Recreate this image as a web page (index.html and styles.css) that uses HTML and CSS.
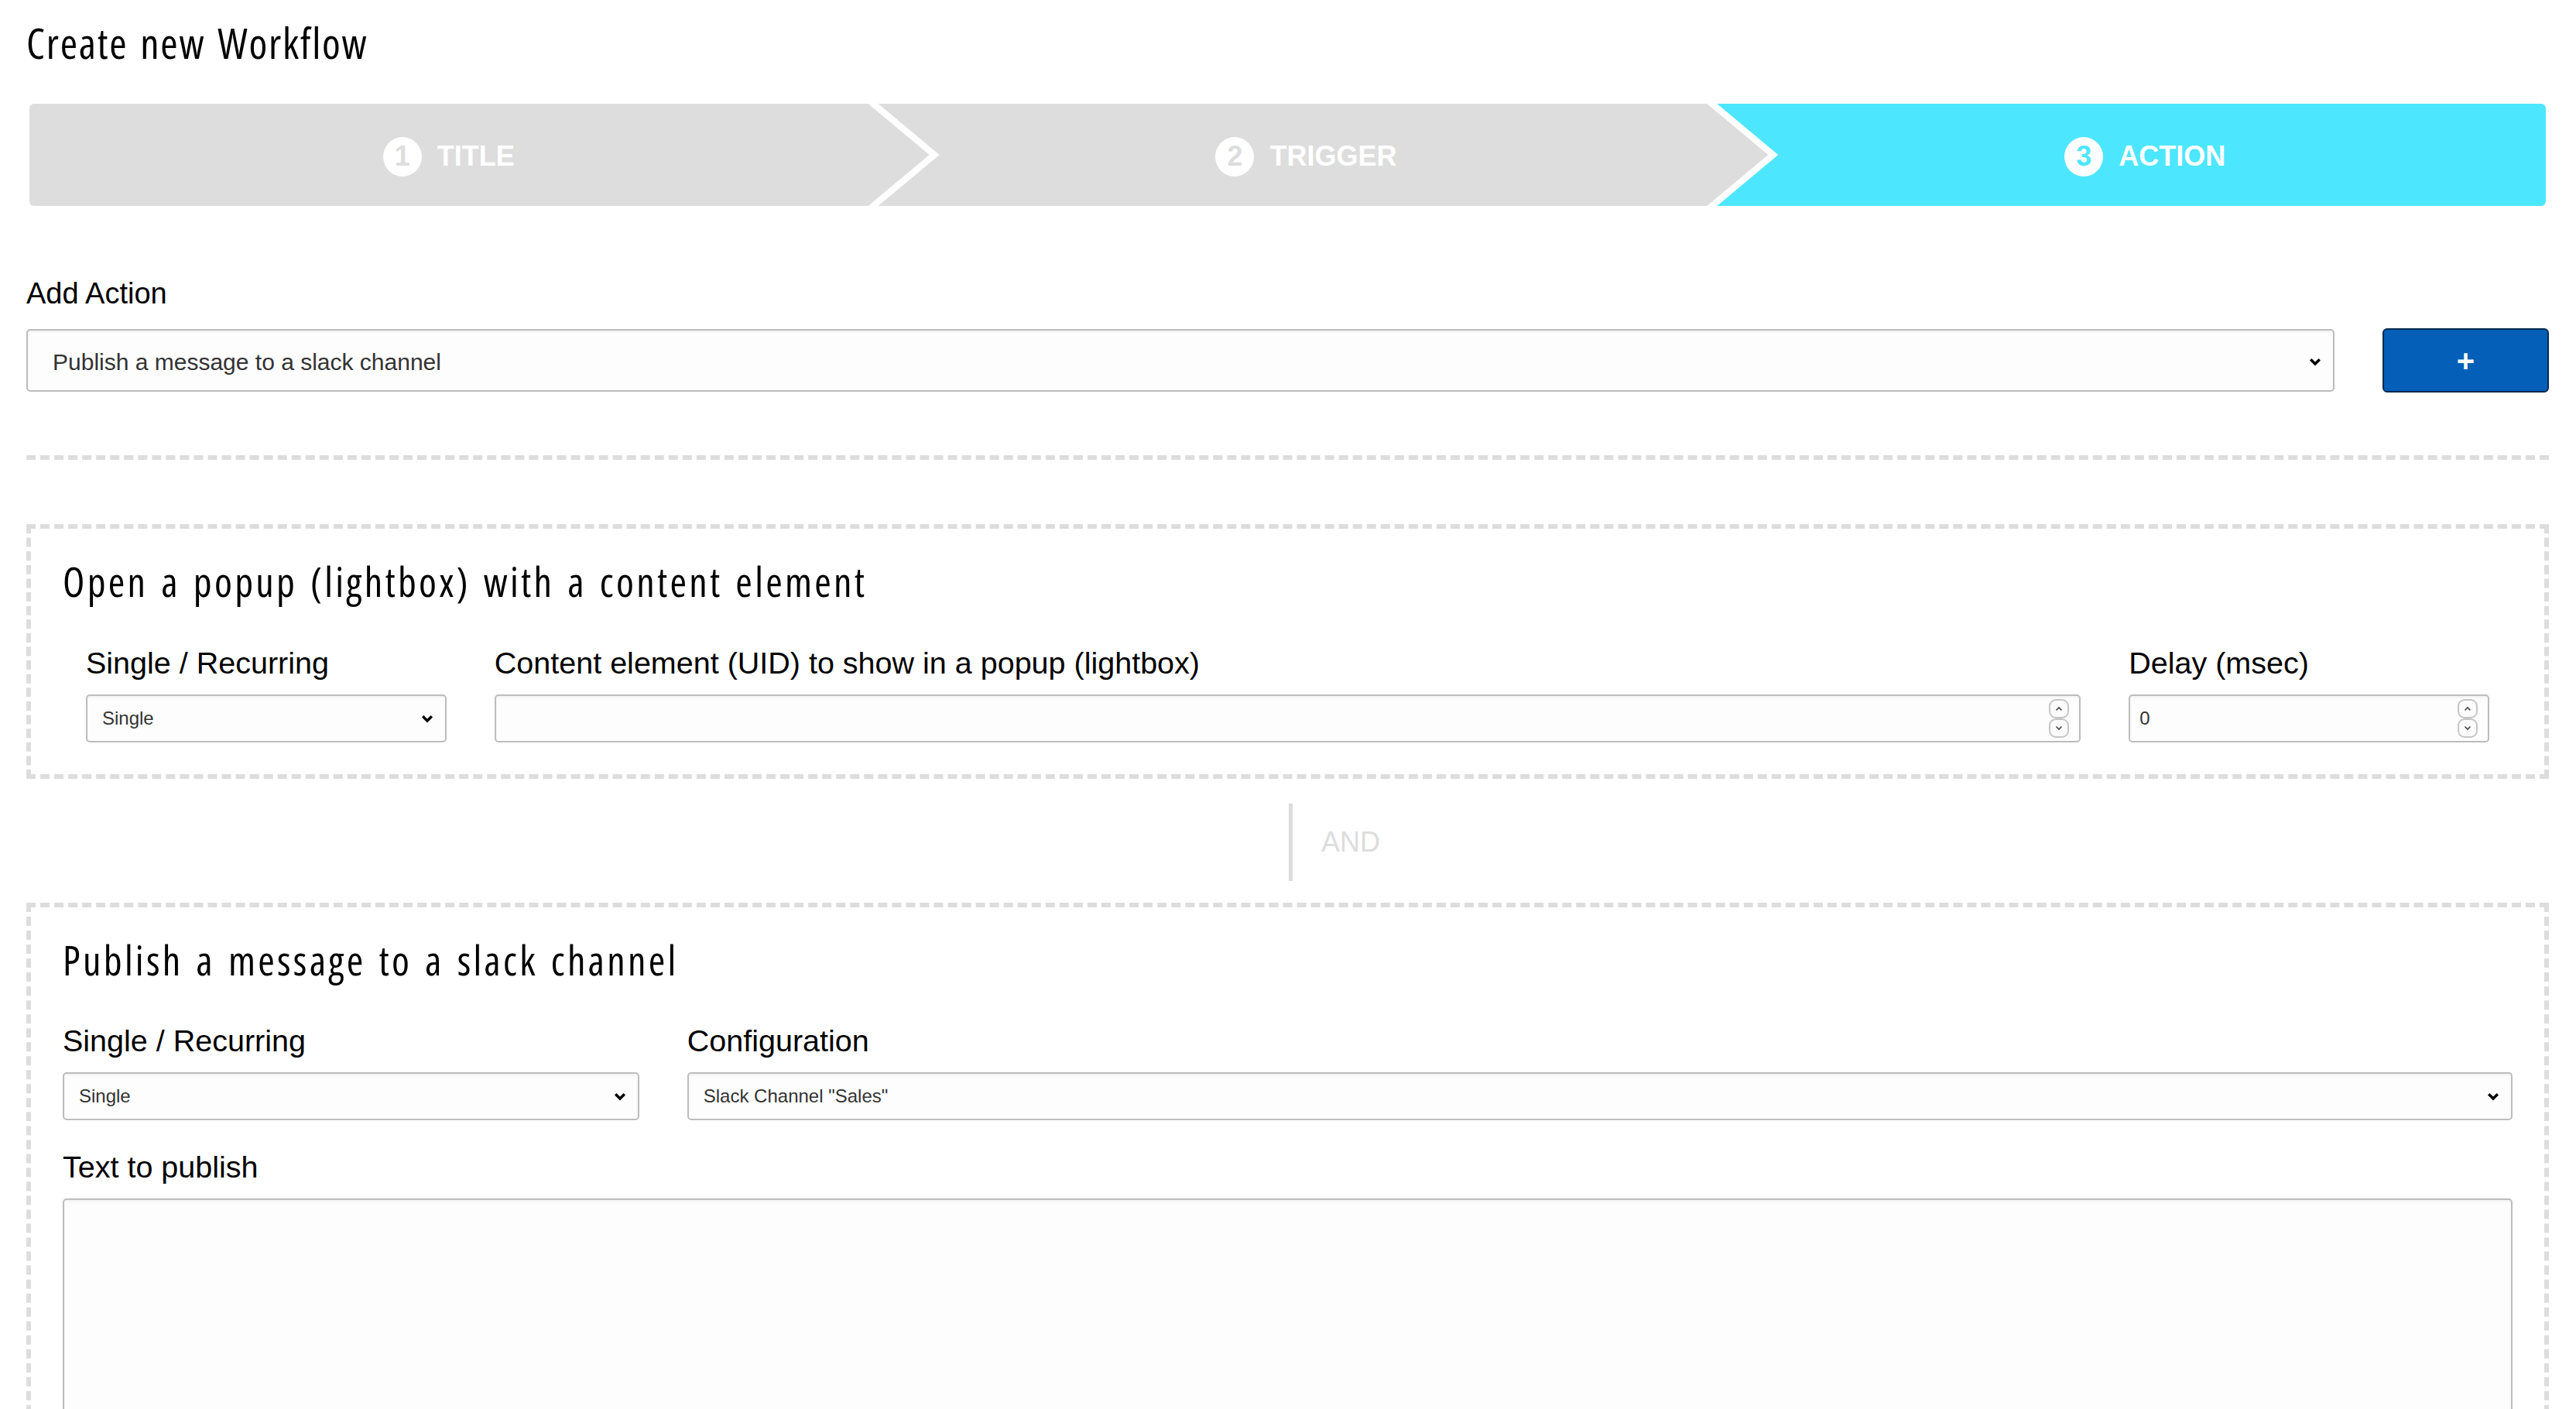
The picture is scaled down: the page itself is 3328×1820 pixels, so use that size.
FILE: index.html
```html
<!DOCTYPE html>
<html lang="en">
<head>
<meta charset="utf-8">
<title>Create new Workflow</title>
<link rel="stylesheet" href="styles.css">
</head>
<body>
<main class="page">
  <h1 class="page-title">Create new Workflow</h1>

  <ol class="steps">
    <li class="step step-first"><span class="step-num">1</span><span class="step-label">TITLE</span></li>
    <li class="step step-mid"><span class="step-num">2</span><span class="step-label">TRIGGER</span></li>
    <li class="step step-last step-active"><span class="step-num">3</span><span class="step-label">ACTION</span></li>
  </ol>

  <section class="add-action">
    <div class="add-label">Add Action</div>
    <div class="add-row">
      <div class="select select-lg">
        <span>Publish a message to a slack channel</span>
        <svg class="chev" width="16" height="11" viewBox="0 0 16 11"><polyline points="2.2,2.2 8,8 13.8,2.2" fill="none" stroke="#000" stroke-width="3.4"/></svg>
      </div>
      <button class="btn-add" type="button">+</button>
    </div>
  </section>

  <section class="action-box">
    <h2 class="box-title">Open a popup (lightbox) with a content element</h2>
    <div class="fields fields-popup">
      <div class="field">
        <div class="field-label">Single / Recurring</div>
        <div class="select">
          <span>Single</span>
          <svg class="chev" width="16" height="11" viewBox="0 0 16 11"><polyline points="2.2,2.2 8,8 13.8,2.2" fill="none" stroke="#000" stroke-width="3.4"/></svg>
        </div>
      </div>
      <div class="field">
        <div class="field-label">Content element (UID) to show in a popup (lightbox)</div>
        <div class="num">
          <input class="num-input" type="text" value="">
          <div class="spin">
            <span class="spin-btn"><svg width="10" height="7" viewBox="0 0 10 7"><polyline points="1.5,5.5 5,2 8.5,5.5" fill="none" stroke="#444" stroke-width="1.6"/></svg></span>
            <span class="spin-btn"><svg width="10" height="7" viewBox="0 0 10 7"><polyline points="1.5,1.5 5,5 8.5,1.5" fill="none" stroke="#444" stroke-width="1.6"/></svg></span>
          </div>
        </div>
      </div>
      <div class="field">
        <div class="field-label">Delay (msec)</div>
        <div class="num">
          <input class="num-input" type="text" value="0">
          <div class="spin">
            <span class="spin-btn"><svg width="10" height="7" viewBox="0 0 10 7"><polyline points="1.5,5.5 5,2 8.5,5.5" fill="none" stroke="#444" stroke-width="1.6"/></svg></span>
            <span class="spin-btn"><svg width="10" height="7" viewBox="0 0 10 7"><polyline points="1.5,1.5 5,5 8.5,1.5" fill="none" stroke="#444" stroke-width="1.6"/></svg></span>
          </div>
        </div>
      </div>
    </div>
  </section>

  <div class="and-sep">
    <span class="and-line"></span>
    <span class="and-text">AND</span>
  </div>

  <section class="action-box">
    <h2 class="box-title">Publish a message to a slack channel</h2>
    <div class="fields fields-slack">
      <div class="field">
        <div class="field-label">Single / Recurring</div>
        <div class="select">
          <span>Single</span>
          <svg class="chev" width="16" height="11" viewBox="0 0 16 11"><polyline points="2.2,2.2 8,8 13.8,2.2" fill="none" stroke="#000" stroke-width="3.4"/></svg>
        </div>
      </div>
      <div class="field">
        <div class="field-label">Configuration</div>
        <div class="select">
          <span>Slack Channel "Sales"</span>
          <svg class="chev" width="16" height="11" viewBox="0 0 16 11"><polyline points="2.2,2.2 8,8 13.8,2.2" fill="none" stroke="#000" stroke-width="3.4"/></svg>
        </div>
      </div>
    </div>
    <div class="field field-text">
      <div class="field-label">Text to publish</div>
      <textarea class="textarea"></textarea>
    </div>
  </section>
</main>
</body>
</html>
```

FILE: styles.css
```css
html, body {
  margin: 0;
  padding: 0;
  background: #ffffff;
}

body {
  font-family: "Liberation Sans", Arial, sans-serif;
  color: #000;
}

.page {
  padding: 24px 35px 0 34px;
}

.page-title {
  margin: 0;
  font-family: "Open Sans", "Noto Sans", sans-serif;
  font-stretch: 75%;
  font-weight: normal;
  font-size: 54px;
  line-height: 62px;
  letter-spacing: 1.8px;
  word-spacing: 4px;
  color: #000;
}

/* ---------- stepper ---------- */
.steps {
  list-style: none;
  margin: 48px 4px 0;
  padding: 0;
  display: flex;
  height: 132px;
}

.step {
  flex: none;
  box-sizing: border-box;
  display: flex;
  align-items: center;
  justify-content: center;
  gap: 20px;
  padding-top: 4px;
  background: #dddddd;
  color: #ffffff;
  font-family: "Liberation Sans", Arial, sans-serif;
  font-weight: bold;
  font-size: 36px;
}

.step-first {
  width: calc(100% / 3 + 79px);
  margin-right: -79px;
  padding-right: 79px;
  border-radius: 6px 0 0 6px;
  clip-path: polygon(0 0, calc(100% - 79px) 0, 100% 50%, calc(100% - 79px) 100%, 0 100%);
}

.step-mid {
  width: calc(100% / 3 + 79px);
  margin-right: -79px;
  padding-right: 79px;
  padding-left: 48px;
  clip-path: polygon(13px 0, calc(100% - 79px) 0, 100% 50%, calc(100% - 79px) 100%, 13px 100%, 92px 50%);
}

.step-last {
  width: calc(100% / 3);
  padding-left: 48px;
  border-radius: 0 6px 6px 0;
  clip-path: polygon(13px 0, 100% 0, 100% 100%, 13px 100%, 92px 50%);
}

.step-active {
  background: #4de6ff;
}

.step-num {
  width: 50px;
  height: 51px;
  border-radius: 50%;
  background: #ffffff;
  color: #dddddd;
  display: flex;
  align-items: center;
  justify-content: center;
  font-size: 36px;
  font-weight: bold;
  line-height: 1;
}

.step-active .step-num {
  color: #4de6ff;
}

/* ---------- add action ---------- */
.add-action {
  margin-top: 91px;
  padding-bottom: 81px;
  border-bottom: 6px dashed #dddddd;
}

.add-label {
  font-size: 38px;
  line-height: 44px;
  margin-bottom: 23px;
  color: #000;
}

.add-row {
  display: flex;
  align-items: center;
  gap: 62px;
}

.select {
  box-sizing: border-box;
  height: 62px;
  border: 2px solid #bdbdbd;
  border-radius: 5px;
  background: #fdfdfd;
  box-shadow: inset 0 2px 3px rgba(0, 0, 0, 0.05);
  display: flex;
  align-items: center;
  justify-content: space-between;
  padding: 0 15px 0 19px;
  font-size: 24px;
  color: #333333;
}

.select-lg {
  flex: 1;
  height: 81px;
  padding: 4px 15px 0 32px;
  font-size: 30px;
}

.chev {
  flex: none;
  display: block;
}

.btn-add {
  flex: none;
  box-sizing: border-box;
  width: 215px;
  height: 83px;
  background: #035fb7;
  border: 2px solid #06294f;
  border-radius: 6px;
  color: #ffffff;
  font-family: "Liberation Sans", Arial, sans-serif;
  font-weight: bold;
  font-size: 40px;
  line-height: 1;
  padding: 0;
}

/* ---------- action boxes ---------- */
.action-box {
  border: 6px dashed #dddddd;
  padding: 38px 41px 41px;
}

.add-action + .action-box {
  margin-top: 83px;
}

.box-title {
  margin: 0;
  font-family: "Open Sans", "Noto Sans", sans-serif;
  font-stretch: 75%;
  font-weight: normal;
  font-size: 52px;
  line-height: 60px;
  letter-spacing: 3.3px;
  word-spacing: 4px;
  color: #000;
}

.fields {
  display: grid;
  column-gap: 62px;
}

.fields-popup {
  margin: 52px 30px 0;
  grid-template-columns: calc((100% + 62px) / 6 - 62px) 1fr calc((100% + 62px) / 6 - 62px);
}

.fields-slack {
  margin-top: 51px;
  grid-template-columns: calc((100% + 62px) / 4 - 62px) 1fr;
}

.field-label {
  font-size: 39.5px;
  line-height: 46px;
  margin-bottom: 18px;
  color: #000;
}

.num {
  box-sizing: border-box;
  height: 62px;
  border: 2px solid #bdbdbd;
  border-radius: 5px;
  background: #fdfdfd;
  box-shadow: inset 0 2px 3px rgba(0, 0, 0, 0.05);
  display: flex;
  align-items: center;
  padding: 0 13px 0 12px;
}

.num-input {
  flex: 1;
  min-width: 0;
  border: 0;
  outline: none;
  background: transparent;
  padding: 0;
  font-family: "Liberation Sans", Arial, sans-serif;
  font-size: 24px;
  color: #333333;
}

.spin {
  flex: none;
  display: flex;
  flex-direction: column;
}

.spin-btn {
  box-sizing: border-box;
  width: 26px;
  height: 25px;
  border: 2px solid #c6c6c6;
  border-radius: 9px;
  background: #fbfbfb;
  display: flex;
  align-items: center;
  justify-content: center;
}

.spin-btn svg {
  display: block;
}

/* ---------- AND separator ---------- */
.and-sep {
  display: grid;
  grid-template-columns: 1fr 5px 1fr;
  height: 100px;
  margin: 32px 0 28px;
  padding-left: 8px;
}

.and-line {
  grid-column: 2;
  background: #dddddd;
}

.and-text {
  grid-column: 3;
  align-self: center;
  padding-left: 37px;
  font-size: 36px;
  color: #dddddd;
}

/* ---------- text area ---------- */
.field-text {
  margin-top: 37px;
}

.textarea {
  display: block;
  box-sizing: border-box;
  width: 100%;
  height: 340px;
  border: 2px solid #bdbdbd;
  border-radius: 5px;
  background: #fdfdfd;
  box-shadow: inset 0 2px 3px rgba(0, 0, 0, 0.05);
  resize: vertical;
  font-family: "Liberation Sans", Arial, sans-serif;
  font-size: 24px;
}
```
